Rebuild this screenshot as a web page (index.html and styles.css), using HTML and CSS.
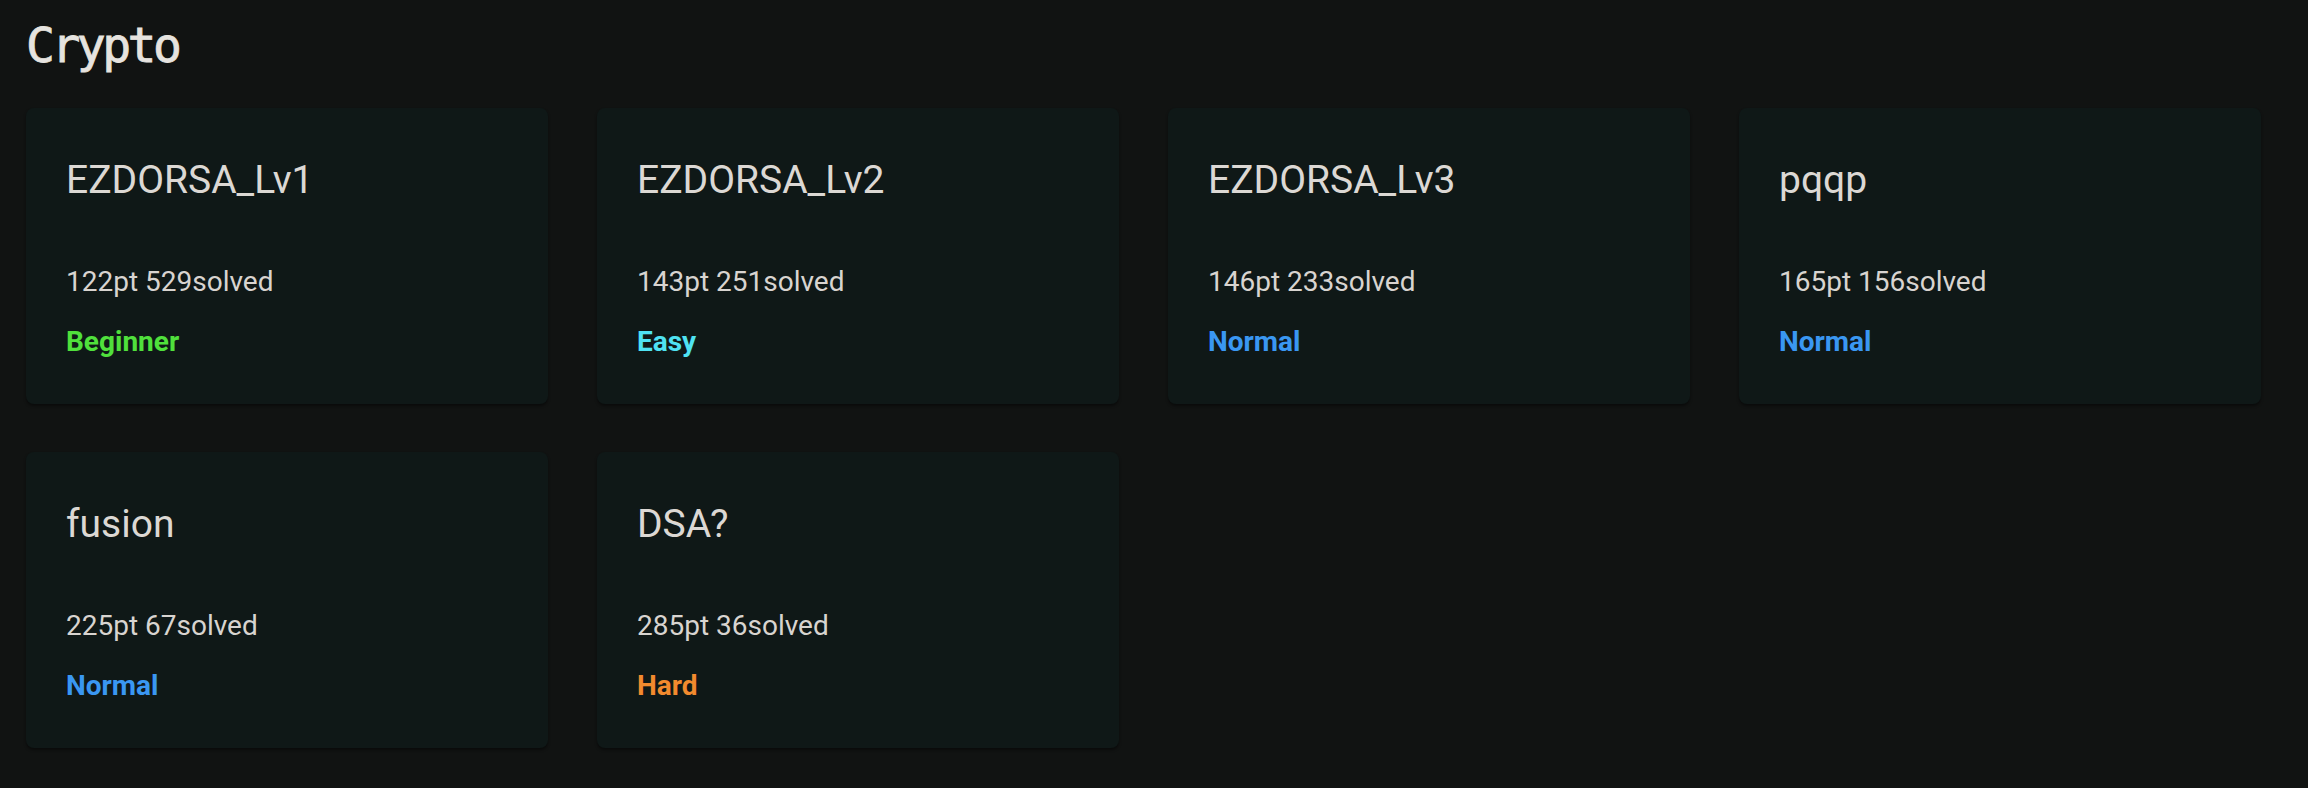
FILE: index.html
```html
<!DOCTYPE html>
<html lang="en">
<head>
<meta charset="utf-8">
<title>Crypto</title>
<link rel="stylesheet" href="styles.css">
</head>
<body>
<main class="page">
  <h1 class="section-title">Crypto</h1>
  <div class="grid">
    <div class="card">
      <div class="card-title">EZDORSA_Lv1</div>
      <div class="card-stats">122pt 529solved</div>
      <div class="card-level beginner">Beginner</div>
    </div>
    <div class="card">
      <div class="card-title">EZDORSA_Lv2</div>
      <div class="card-stats">143pt 251solved</div>
      <div class="card-level easy">Easy</div>
    </div>
    <div class="card">
      <div class="card-title">EZDORSA_Lv3</div>
      <div class="card-stats">146pt 233solved</div>
      <div class="card-level normal">Normal</div>
    </div>
    <div class="card">
      <div class="card-title">pqqp</div>
      <div class="card-stats">165pt 156solved</div>
      <div class="card-level normal">Normal</div>
    </div>
    <div class="card">
      <div class="card-title">fusion</div>
      <div class="card-stats">225pt 67solved</div>
      <div class="card-level normal">Normal</div>
    </div>
    <div class="card">
      <div class="card-title">DSA?</div>
      <div class="card-stats">285pt 36solved</div>
      <div class="card-level hard">Hard</div>
    </div>
  </div>
</main>
</body>
</html>
```

FILE: styles.css
```css
html, body {
  margin: 0;
  background: #111312;
}

.page {
  padding: 18px 47px 40px 26px;
  font-family: Roboto, "Liberation Sans", sans-serif;
  color: #dedad6;
}

.section-title {
  margin: 0 0 36px 0;
  font-family: "DejaVu Sans Mono", monospace;
  font-weight: 400;
  font-size: 48px;
  line-height: 54px;
  letter-spacing: -3.5px;
  color: #e6e3df;
  -webkit-text-stroke: 0.8px #e6e3df;
}

.grid {
  display: grid;
  grid-template-columns: repeat(4, 522px);
  column-gap: 49px;
  row-gap: 48px;
}

.card {
  background: #0f1817;
  border-radius: 8px;
  box-shadow: 0 2px 3px rgba(0, 0, 0, 0.45);
  padding: 50px 40px 46px 40px;
  display: flex;
  flex-direction: column;
}

.card-title {
  font-size: 39px;
  line-height: 44px;
  font-weight: 400;
  color: #dcd8d4;
}

.card-stats {
  margin-top: 63px;
  font-size: 28px;
  line-height: 33px;
  font-weight: 400;
  color: #d8d4d0;
}

.card-level {
  margin-top: 27px;
  font-size: 28px;
  line-height: 33px;
  font-weight: 700;
}

.beginner { color: #50e03c; }
.easy { color: #4fe2f2; }
.normal { color: #3a97f2; }
.hard { color: #f28a2e; }
```
